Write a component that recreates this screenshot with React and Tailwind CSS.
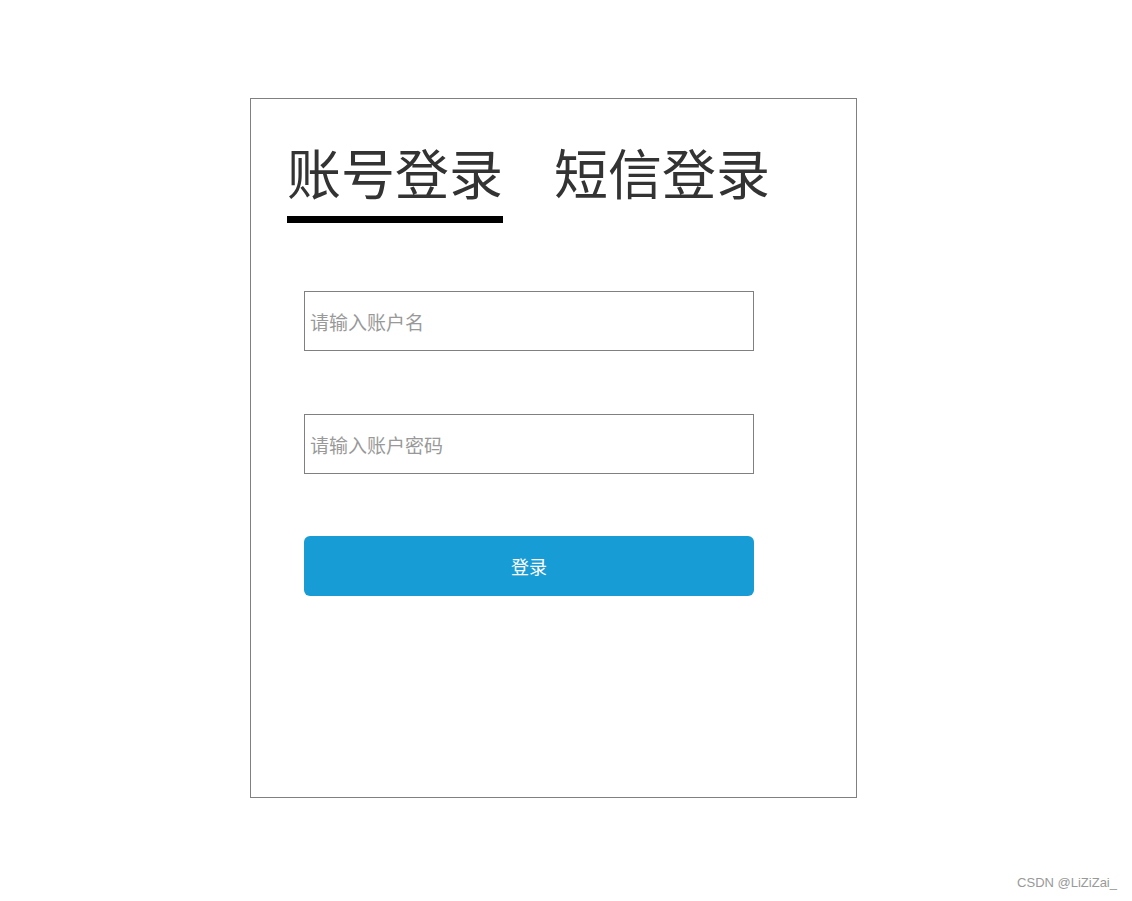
export default function App() {
    const cjk = { fontFamily: '"Microsoft YaHei", "Noto Sans CJK SC", "Noto Sans", sans-serif' };
    return (
        <div className="relative w-[1132px] h-[901px] bg-white overflow-hidden" style={cjk}>
            <div className="ml-[250px] pt-[98px]">
                <div className="w-[607px] h-[700px] border border-[#808080] box-border">
                    {/* tabs */}
                    <div className="flex gap-[51px] pl-[36px] pt-[46px]">
                        <div className="flex flex-col">
                            <span className="text-[54px] leading-none text-[#333]">账号登录</span>
                            <div className="mt-[17px] h-[7px] bg-black" />
                        </div>
                        <span className="text-[54px] leading-none text-[#333]">短信登录</span>
                    </div>

                    <div className="ml-[53px] mt-[68px] w-[450px] flex flex-col gap-[63px]">
                        <input
                            type="text"
                            placeholder="请输入账户名"
                            className="h-[60px] w-full border border-[#808080] pl-[5px] text-[19px] text-[#333] placeholder-[#999] outline-none"
                        />
                        <input
                            type="password"
                            placeholder="请输入账户密码"
                            className="h-[60px] w-full border border-[#808080] pl-[5px] text-[19px] text-[#333] placeholder-[#999] outline-none"
                        />
                        <button className="h-[60px] w-full rounded-[6px] bg-[#189cd6] text-white text-[18px] -mt-px">
                            登录
                        </button>
                    </div>
                </div>
            </div>

            <span
                className="absolute right-[15px] bottom-[9px] text-[13px] text-[#999]"
                style={{ fontFamily: '"Liberation Sans", Arial, sans-serif' }}
            >
                CSDN @LiZiZai_
            </span>
        </div>
    );
}
